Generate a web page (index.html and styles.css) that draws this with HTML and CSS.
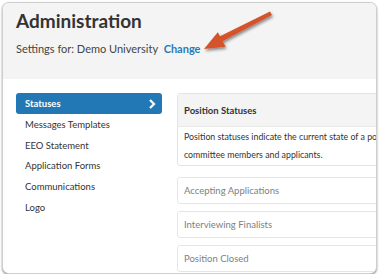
FILE: index.html
```html
<!DOCTYPE html>
<html lang="en">

<head>
  <meta charset="UTF-8" />
  <title>Administration</title>
  <link rel="stylesheet" href="styles.css">
</head>

<body>
  <div class="window">
    <div class="page-head">
      <h1 class="page-title">Administration</h1>
      <p class="page-sub">Settings for: Demo University <a class="link" href="#">Change</a></p>
    </div>
    <div class="page-body">
      <ul class="side-nav">
        <li class="nav-item active">Statuses
          <svg class="chev" width="8" height="10" viewBox="0 0 8 10"><polyline points="2,1 6,5 2,9" fill="none" stroke="#fff" stroke-width="2.2" /></svg>
        </li>
        <li class="nav-item">Messages Templates</li>
        <li class="nav-item">EEO Statement</li>
        <li class="nav-item">Application Forms</li>
        <li class="nav-item">Communications</li>
        <li class="nav-item">Logo</li>
      </ul>
      <div class="main">
        <div class="panel">
          <div class="panel-head">Position Statuses</div>
          <div class="panel-body">Position statuses indicate the current state of a position to<br>committee members and applicants.</div>
        </div>
        <div class="status-list">
          <div class="status">Accepting Applications</div>
          <div class="status">Interviewing Finalists</div>
          <div class="status">Position Closed</div>
        </div>
      </div>
    </div>
  </div>
  <svg class="arrow" width="379" height="80" viewBox="0 0 379 80">
    <defs>
      <filter id="shadow" x="-20%" y="-20%" width="140%" height="160%">
        <feDropShadow dx="1" dy="2" stdDeviation="1.5" flood-color="#000" flood-opacity="0.45" />
      </filter>
    </defs>
    <g filter="url(#shadow)" fill="#d4532b">
      <polygon points="270,11.5 272,15 222,41.5 219.5,36.5" />
      <polygon points="204,49 217.8,32.2 225.6,46.8" />
    </g>
  </svg>
</body>

</html>
```
FILE: styles.css
```css
* {
  box-sizing: border-box;
  margin: 0;
  padding: 0;
}

body {
  background: #fff;
  font-family: Lato, "Open Sans", sans-serif;
  color: #333;
}

.window {
  margin: 2px 0 0 2px;
  width: 375px;
  height: 272px;
  border: 1px solid #cfcfcf;
  border-radius: 7px;
  overflow: hidden;
  background: #fff;
  box-shadow: 0 1px 2px rgba(0, 0, 0, 0.45);
}

.page-head {
  background: #f4f4f4;
  height: 76px;
  padding: 6px 13px 0;
}

.page-title {
  font-size: 19px;
  font-weight: 700;
  line-height: 24px;
  color: #333;
}

.page-sub {
  margin-top: 8px;
  font-size: 11px;
  line-height: 16px;
  color: #444;
}

.link {
  margin-left: 3px;
  color: #2a7ab5;
  font-weight: 700;
  text-decoration: none;
}

.page-body {
  display: flex;
  gap: 15px;
  padding: 14px 0 0 13px;
}

.side-nav {
  list-style: none;
  width: 146px;
  flex: none;
}

.nav-item {
  display: flex;
  align-items: center;
  justify-content: space-between;
  height: 20.7px;
  padding: 0 6px 0 9px;
  font-size: 9.5px;
  color: #333;
}

.nav-item.active {
  height: 21px;
  background: #2278b5;
  color: #fff;
  font-weight: 700;
  border-radius: 3px;
}

.main {
  flex: none;
  width: 300px;
}

.panel {
  border: 1px solid #e4e4e4;
  border-radius: 3px;
}

.panel-head {
  display: flex;
  align-items: center;
  height: 33px;
  padding: 0 6px;
  background: #f4f4f4;
  border-bottom: 1px solid #e8e8e8;
  font-size: 9.5px;
  font-weight: 700;
  color: #333;
}

.panel-body {
  padding: 1px 6px 2px;
  font-size: 8.8px;
  line-height: 17.5px;
  color: #333;
  white-space: nowrap;
}

.status-list {
  display: flex;
  flex-direction: column;
  gap: 7px;
  margin-top: 11px;
}

.status {
  display: flex;
  align-items: center;
  height: 27px;
  padding: 0 6px;
  border: 1px solid #e6e6e6;
  border-radius: 3px;
  font-size: 9.5px;
  color: #808080;
}

.arrow {
  position: absolute;
  top: 0;
  left: 0;
}
```
